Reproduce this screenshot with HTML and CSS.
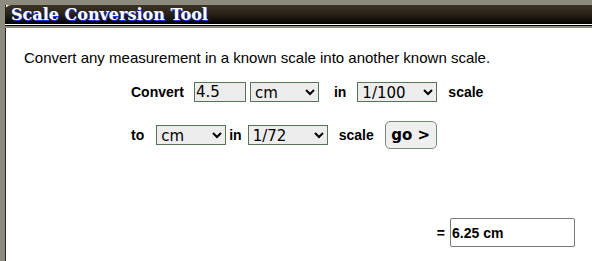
FILE: index.html
```html
<!DOCTYPE html>
<html lang="en">
<head>
  <meta charset="UTF-8" />
  <title>Scale Conversion Tool</title>
  <link rel="stylesheet" href="styles.css">
</head>
<body>
  <div id="panel">
    <div id="header"><h1>Scale Conversion Tool</h1></div>
    <div id="content">
      <p class="intro">Convert any measurement in a known scale into another known scale.</p>
      <div class="form">
        <div class="row">
          <label class="lbl lbl-convert">Convert</label>
          <input class="field value" type="text" value="4.5">
          <select class="field unit"><option>cm</option></select>
          <label class="lbl lbl-in">in</label>
          <select class="field scale"><option>1/100</option></select>
          <label class="lbl lbl-scale">scale</label>
        </div>
        <div class="row">
          <label class="lbl lbl-to">to</label>
          <select class="field unit unit2"><option>cm</option></select>
          <label class="lbl lbl-in2">in</label>
          <select class="field scale"><option>1/72</option></select>
          <label class="lbl lbl-scale">scale</label>
          <button class="go" onclick="convert()">go &gt;</button>
        </div>
      </div>
      <div class="result">
        <span class="eq">=</span>
        <input class="out" type="text" value="6.25 cm" readonly>
      </div>
    </div>
  </div>
  <script>
    function convert() {}
  </script>
</body>
</html>
```
FILE: styles.css
```css
* {
  box-sizing: border-box;
  margin: 0;
  padding: 0;
}
body {
  background: #8c8b7d;
  font-family: 'Liberation Sans', Arial, sans-serif;
  height: 100vh;
  overflow: hidden;
  padding: 5px 0 0 5px;
}
#panel {
  background: #fff;
  border-left: 1px solid #2a241a;
  height: 100%;
}
#header {
  height: 20px;
  margin-left: -1px;
  background: linear-gradient(180deg, #3b3426 0%, #2a2419 45%, #0e0c08 85%, #000 100%);
  border-top-left-radius: 6px;
  border-bottom: 1px solid #fff;
  box-shadow: 0 1px 0 #000, 0 3px 0 #8c8b7d;
  padding-left: 6px;
}
#header h1 {
  font-family: 'DejaVu Serif', Georgia, serif;
  font-weight: bold;
  font-size: 16px;
  line-height: 20px;
  color: #fff;
  text-shadow: 1px 1px 0 #1a3cff;
}
#content {
  padding-top: 24px;
}
.intro {
  font-size: 15px;
  line-height: 18px;
  padding-left: 18px;
  color: #000;
}
.form {
  padding-left: 125px;
  margin-top: 11px;
}
.row {
  display: flex;
  align-items: center;
  height: 28px;
  margin-bottom: 15px;
}
.lbl {
  font-weight: bold;
  font-size: 14px;
}
.field {
  height: 20px;
  border: 1px solid #567555;
  background: #ededed;
  font-family: 'DejaVu Sans', Verdana, sans-serif;
  font-size: 15px;
  color: #000;
}
.value {
  width: 52px;
  padding-left: 1px;
  margin-left: 10px;
}
.unit {
  width: 69px;
  margin-left: 4px;
}
.unit2 {
  width: 70px;
  margin-left: 0;
}
.scale {
  width: 80px;
}
.lbl-in { margin-left: 15px; margin-right: 11px; }
.lbl-scale { margin-left: 11px; }
.lbl-to { margin-right: 12px; }
.lbl-in2 { margin-left: 3px; margin-right: 6px; }
.go {
  margin-left: 11px;
  width: 52px;
  height: 28px;
  border: 1px solid #7a8a78;
  border-radius: 5px;
  background: #efefef;
  font-family: 'DejaVu Sans', Verdana, sans-serif;
  font-weight: bold;
  font-size: 15px;
  color: #000;
}
.result {
  display: flex;
  align-items: center;
  justify-content: flex-end;
  padding-right: 17px;
  margin-top: 69px;
}
.eq {
  font-weight: bold;
  font-size: 14px;
  margin-right: 5px;
}
.out {
  width: 125px;
  height: 29px;
  border: 1px solid #7a7a7a;
  border-radius: 2px;
  background: #fff;
  font-family: 'Liberation Sans', Arial, sans-serif;
  font-weight: bold;
  font-size: 14px;
  padding-left: 1px;
  color: #000;
}
```
